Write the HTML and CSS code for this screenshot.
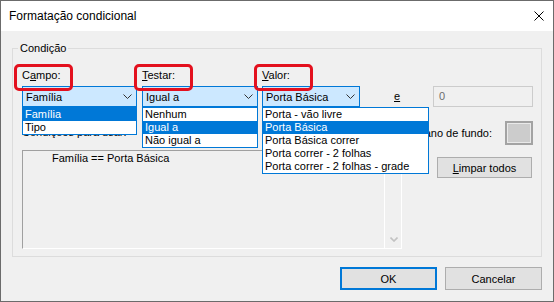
FILE: index.html
```html
<!DOCTYPE html>
<html lang="pt">
<head>
<meta charset="utf-8">
<title>Formatação condicional</title>
<link rel="stylesheet" href="styles.css">
</head>
<body>
<div class="window">
  <div class="titlebar">
    <span class="title">Formatação condicional</span>
    <svg class="close" width="10" height="10" viewBox="0 0 10 10"><path d="M0.5 0.5 L9.5 9.5 M9.5 0.5 L0.5 9.5" stroke="#000" stroke-width="1" fill="none"/></svg>
  </div>
  <div class="body">
    <div class="group">
      <span class="group-title">Condição</span>
      <div class="top">
        <div class="field f-campo">
          <span class="label mark">C<u>a</u>mpo:</span>
          <div class="combo"><span class="combo-text">Família</span><svg class="chev" width="9" height="5" viewBox="0 0 9 5"><polyline points="0.5,0.5 4.5,4.5 8.5,0.5" fill="none" stroke="#333" stroke-width="1"/></svg></div>
          <ul class="droplist">
            <li class="sel">Família</li>
            <li>Tipo</li>
          </ul>
        </div>
        <div class="field f-testar">
          <span class="label mark"><u>T</u>estar:</span>
          <div class="combo"><span class="combo-text">Igual a</span><svg class="chev" width="9" height="5" viewBox="0 0 9 5"><polyline points="0.5,0.5 4.5,4.5 8.5,0.5" fill="none" stroke="#333" stroke-width="1"/></svg></div>
          <ul class="droplist">
            <li>Nenhum</li>
            <li class="sel">Igual a</li>
            <li>Não igual a</li>
          </ul>
        </div>
        <div class="field f-valor">
          <span class="label mark"><u>V</u>alor:</span>
          <div class="combo"><span class="combo-text">Porta Básica</span><svg class="chev" width="9" height="5" viewBox="0 0 9 5"><polyline points="0.5,0.5 4.5,4.5 8.5,0.5" fill="none" stroke="#333" stroke-width="1"/></svg></div>
          <ul class="droplist list-valor">
            <li>Porta - vão livre</li>
            <li class="sel">Porta Básica</li>
            <li>Porta Básica correr</li>
            <li>Porta correr - 2 folhas</li>
            <li>Porta correr - 2 folhas - grade</li>
          </ul>
        </div>
        <span class="e-label"><u>e</u></span>
        <div class="textbox">0</div>
      </div>
      <div class="bottom">
        <div class="left">
          <div class="cond-label">Condições para usar:</div>
          <div class="listbox">
            <div class="listbox-text">Família == Porta Básica</div>
            <div class="scrollbar">
              <span class="scroll-arrow"><svg width="8" height="5" viewBox="0 0 8 5"><polyline points="0.5,0.5 4,4 7.5,0.5" fill="none" stroke="#c2c2c2" stroke-width="1.6"/></svg></span>
            </div>
          </div>
        </div>
        <div class="right">
          <div class="bg-row"><span class="bg-label">Plano de fundo:</span><span class="swatch"></span></div>
          <button class="btn btn-clear"><u>L</u>impar todos</button>
        </div>
      </div>
    </div>
    <div class="actions">
      <button class="btn btn-action btn-default">OK</button>
      <button class="btn btn-action">Cancelar</button>
    </div>
  </div>
</div>
</body>
</html>
```
FILE: styles.css
```css
* { box-sizing: border-box; }
html, body { margin: 0; padding: 0; }
body {
  background: #f0f0f0;
  font-family: "Liberation Sans", Arial, sans-serif;
  font-size: 11px;
  color: #000;
}
.window {
  width: 554px;
  height: 302px;
  border: 1px solid #6b6b6b;
  background: #f0f0f0;
  overflow: hidden;
}
.titlebar {
  height: 30px;
  background: #fff;
  display: flex;
  align-items: center;
  padding-left: 8px;
  padding-right: 9px;
}
.title {
  font-size: 12px;
  flex: 1;
  line-height: 16px;
  margin-top: 0;
}
.close { display: block; margin-top: 0; }
.body {
  padding: 0 11px;
}
.group {
  margin-top: 17px;
  border: 1px solid #dcdcdc;
  padding: 0 8px 7px 9px;
}
.group-title {
  display: block;
  width: fit-content;
  margin: -8px 0 0 -4px;
  padding: 0 2px;
  background: #f0f0f0;
  line-height: 14px;
}
.top {
  display: flex;
  align-items: flex-end;
  margin-top: 12px;
}
.field {
  position: relative;
  display: flex;
  flex-direction: column;
  align-items: flex-start;
}
.f-campo { width: 115px; margin-right: 5px; }
.f-testar { width: 116px; margin-right: 4px; }
.f-valor { width: 98px; }
.label {
  line-height: 16px;
  height: 16px;
}
.mark { position: relative; }
.mark::after {
  content: "";
  position: absolute;
  left: -8px;
  top: -3px;
  width: 53px;
  height: 21px;
  border: 3px solid #e3101e;
  border-radius: 5px;
}
.combo {
  margin-top: 3px;
  width: 100%;
  height: 21px;
  border: 1px solid #0078d7;
  background: #cce8ff;
  display: flex;
  align-items: center;
  padding-left: 3px;
  padding-right: 4px;
}
.combo-text { flex: 1; line-height: 14px; }
.chev { display: block; }
.droplist {
  position: absolute;
  left: 0;
  top: 100%;
  width: 100%;
  margin: 0;
  padding: 0;
  list-style: none;
  background: #fff;
  border: 1px solid #0078d7;
  z-index: 10;
}
.list-valor { width: 167px; }
.droplist li {
  height: 13px;
  line-height: 13px;
  padding-left: 2px;
  white-space: nowrap;
}
.droplist li.sel {
  background: #0078d7;
  color: #fff;
}
.e-label {
  margin-left: 34px;
  line-height: 21px;
  height: 21px;
}
.textbox {
  margin-left: auto;
  width: 100px;
  height: 21px;
  border: 1px solid #cccccc;
  background: #f0f0f0;
  color: #6d6d6d;
  padding-left: 5px;
  line-height: 19px;
}
.bottom {
  display: flex;
  justify-content: space-between;
}
.left { width: 380px; }
.cond-label {
  margin-top: 18px;
  line-height: 14px;
  height: 14px;
}
.listbox {
  margin-top: 11px;
  height: 99px;
  border-top: 1px solid #a0a0a0;
  border-left: 1px solid #a0a0a0;
  border-right: 1px solid #fff;
  border-bottom: 1px solid #fff;
  background: #f0f0f0;
  display: flex;
}
.listbox-text {
  flex: 1;
  padding-left: 29px;
  line-height: 14px;
}
.scrollbar {
  width: 17px;
  border-left: 1px solid #fff;
  display: flex;
  flex-direction: column;
  justify-content: flex-end;
}
.scroll-arrow {
  height: 17px;
  display: flex;
  align-items: center;
  justify-content: center;
  padding-left: 1px;
}
.scroll-arrow svg { display: block; }
.right {
  width: 100px;
  display: flex;
  flex-direction: column;
  align-items: flex-end;
}
.bg-row {
  margin-top: 14px;
  display: flex;
  align-items: center;
  justify-content: flex-end;
  white-space: nowrap;
  height: 24px;
}
.bg-label { margin-right: 13px; }
.swatch {
  width: 28px;
  height: 24px;
  border: 2px solid #a3a3a3;
  box-shadow: inset 0 0 0 1px #e9e9e9;
  background: #cccccc;
}
.btn {
  font-family: "Liberation Sans", Arial, sans-serif;
  font-size: 11px;
  color: #000;
  background: #e1e1e1;
  border: 1px solid #adadad;
  padding: 0;
  margin: 0;
  border-radius: 0;
}
.btn-clear {
  margin-top: 12px;
  margin-right: 1px;
  width: 95px;
  height: 21px;
}
.actions {
  display: flex;
  justify-content: flex-end;
  gap: 8px;
  margin-top: 10px;
}
.btn-action {
  width: 97px;
  height: 23px;
}
.btn-default {
  border: 2px solid #0078d7;
}
```
